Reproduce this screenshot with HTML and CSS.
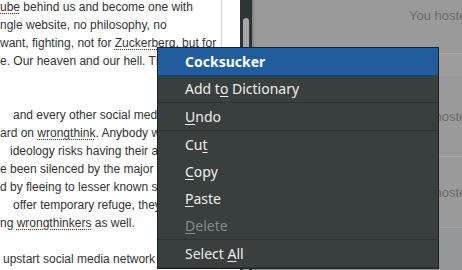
FILE: index.html
```html
<!DOCTYPE html>
<html>
<head>
<meta charset="utf-8">
<link rel="stylesheet" href="styles.css">
</head>
<body>
<div class="screen">
  <div class="doc">
    <div class="doc-text">
      <div class="para first">
        <div class="line"><span class="sp">ube</span> behind us and become one with</div>
        <div class="line">ngle website, no philosophy, no</div>
        <div class="line">want, fighting, not for <span class="sp">Zuckerberg</span>, but for</div>
        <div class="line">e. Our heaven and our hell. The</div>
      </div>
      <div class="para">
        <div class="line i13">and every other social media</div>
        <div class="line">ard on <span class="sp">wrongthink</span>. Anybody who</div>
        <div class="line i10">ideology risks having their acc</div>
        <div class="line">e been silenced by the major site</div>
        <div class="line">d by fleeing to lesser known site</div>
        <div class="line i13">offer temporary refuge, they</div>
        <div class="line">ng <span class="sp">wrongthinkers</span> as well.</div>
      </div>
      <div class="para">
        <div class="line i3">upstart social media network fo</div>
      </div>
    </div>
  </div>
  <div class="trough"><div class="thumb"></div></div>
  <div class="panel">
    <div class="row row-top"><span class="msg">You hosted</span></div>
    <div class="row row-gap"></div>
    <div class="row row-a"><span class="msg">You hosted</span></div>
    <div class="row row-b"><span class="msg">You hosted</span></div>
    <div class="row row-c"></div>
  </div>
</div>

<div class="menu">
  <div class="item selected"><b>Cocksucker</b></div>
  <div class="item">Add t<u>o</u> Dictionary</div>
  <div class="sep"></div>
  <div class="item"><u>U</u>ndo</div>
  <div class="sep"></div>
  <div class="item">Cu<u>t</u></div>
  <div class="item"><u>C</u>opy</div>
  <div class="item"><u>P</u>aste</div>
  <div class="item disabled"><u>D</u>elete</div>
  <div class="sep"></div>
  <div class="item">Select <u>A</u>ll</div>
  <div class="sep"></div>
</div>
</body>
</html>
```

FILE: styles.css
```css
html, body {
  margin: 0;
  padding: 0;
}
body {
  width: 462px;
  height: 270px;
  overflow: hidden;
  position: relative;
  background: #9a9a9a;
}
.screen {
  display: flex;
  height: 270px;
  overflow: hidden;
}
.doc {
  width: 240px;
  flex: none;
  background: #ffffff;
  overflow: hidden;
}
.doc-text {
  width: 222px;
  height: 270px;
  border-right: 1px solid #cdd0ea;
  box-sizing: border-box;
  overflow: hidden;
  font-family: "Liberation Sans", Arial, sans-serif;
  font-size: 12px;
  line-height: 18px;
  color: #333333;
}
.para.first {
  margin-top: -2px;
}
.para + .para {
  margin-top: 18px;
}
.para.first + .para {
  margin-top: 36px;
}
.line {
  white-space: nowrap;
}
.i13 { padding-left: 13px; }
.i10 { padding-left: 10px; }
.i3 { padding-left: 3px; }
.sp {
  text-decoration: underline dotted #cc0000;
  text-decoration-thickness: 1px;
  text-underline-offset: 2px;
}
.trough {
  width: 12px;
  flex: none;
  background: #2e3335;
  overflow: hidden;
}
.thumb {
  margin: 18px 0 0 3px;
  width: 6px;
  height: 252px;
  border-radius: 3px 3px 0 0;
  background: #a4a6a7;
}
.panel {
  flex: 1;
  min-width: 0;
  overflow: hidden;
  background: #9a9a9a;
  display: flex;
  flex-direction: column;
  font-family: "Liberation Sans", Arial, sans-serif;
  font-size: 13px;
  color: #6b6b6b;
  box-shadow: inset 3px 0 3px -2px rgba(0,0,0,0.25);
}
.row {
  display: flex;
  align-items: center;
  padding-left: 157px;
  box-sizing: border-box;
  flex: none;
  white-space: nowrap;
}
.row-top {
  height: 54px;
  border-bottom: 1px solid #a9a9a9;
  align-items: flex-start;
  padding-top: 8px;
}
.row-gap {
  height: 22px;
  background: #9d9d9d;
}
.row-a {
  height: 81px;
  border-bottom: 1px solid #a9a9a9;
}
.row-b {
  height: 71px;
  border-bottom: 1px solid #a4a4a4;
}
.row-c {
  flex: 1;
  background: #95989a;
}
.menu {
  position: absolute;
  left: 157px;
  top: 47px;
  width: 280px;
  background: #393e3f;
  border: 1px solid #1d2122;
  font-family: "Noto Sans", "Open Sans", sans-serif;
  font-size: 14px;
  color: #eeeeec;
}
.item {
  height: 27px;
  line-height: 27px;
  padding-left: 27px;
  white-space: nowrap;
}
.item u {
  text-decoration-thickness: 1px;
  text-underline-offset: 2px;
}
.item.selected {
  background: #215d9c;
  color: #ffffff;
}
.item.disabled {
  color: #858a8b;
}
.sep {
  height: 1px;
  background: #2f3334;
}
```
